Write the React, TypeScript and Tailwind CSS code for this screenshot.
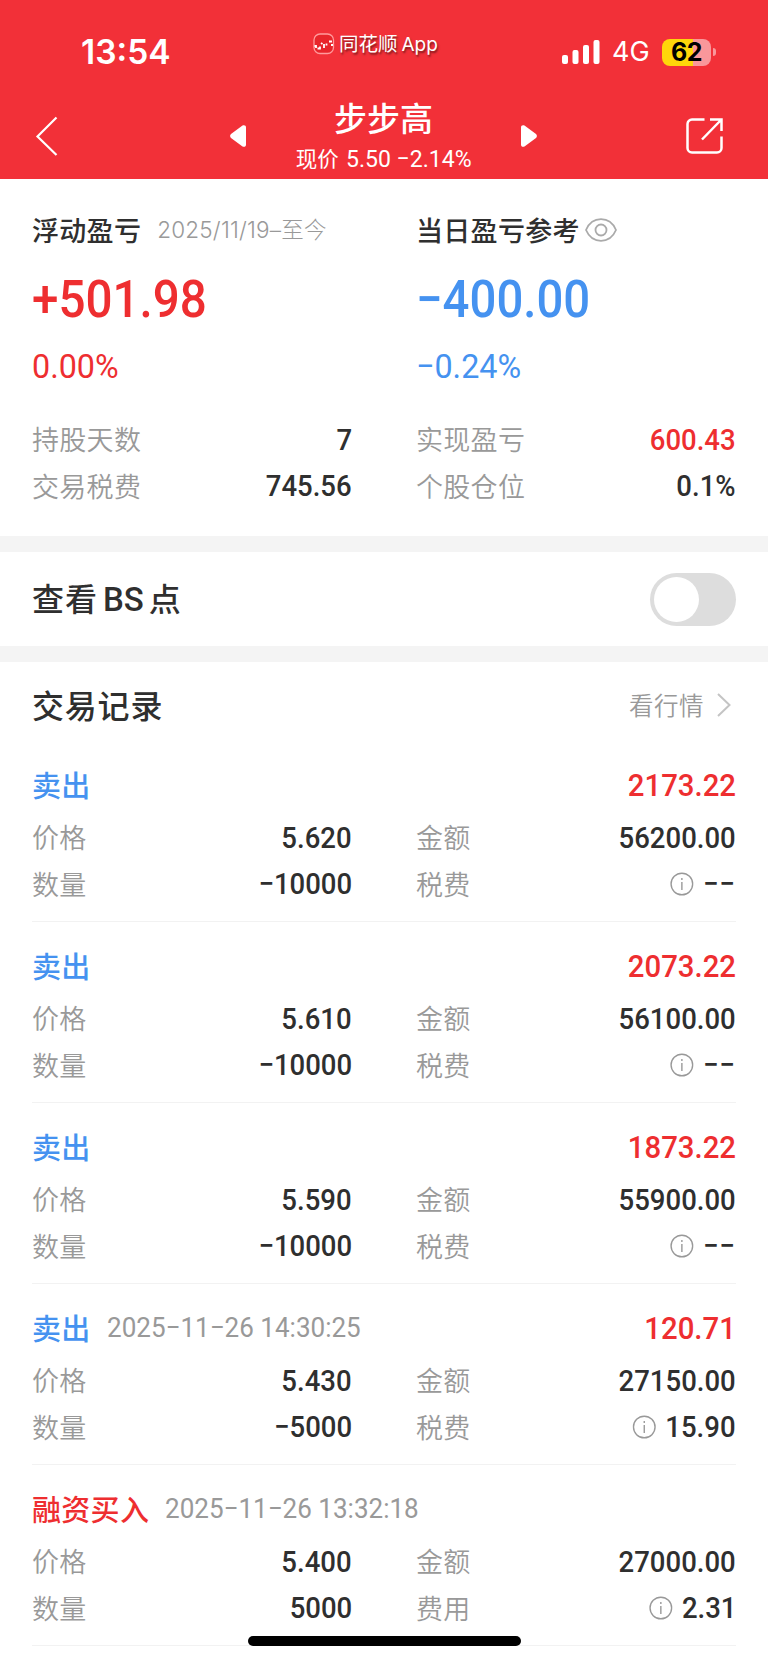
import { clsx } from "clsx";

interface Field {
    label: string;
    value: string;
    tone?: "up";
    info?: boolean;
}

interface TradeRecord {
    side: "卖出" | "融资买入";
    time?: string;
    profit?: string;
    fields: Field[];
}

const SUMMARY: Field[] = [
    { label: "持股天数", value: "7" },
    { label: "实现盈亏", value: "600.43", tone: "up" },
    { label: "交易税费", value: "745.56" },
    { label: "个股仓位", value: "0.1%" },
];

const makeFields = (price: string, amount: string, count: string, feeLabel: string, fee: string): Field[] => [
    { label: "价格", value: price },
    { label: "金额", value: amount },
    { label: "数量", value: count },
    { label: feeLabel, value: fee, info: true },
];

const RECORDS: TradeRecord[] = [
    { side: "卖出", profit: "2173.22", fields: makeFields("5.620", "56200.00", "−10000", "税费", "−−") },
    { side: "卖出", profit: "2073.22", fields: makeFields("5.610", "56100.00", "−10000", "税费", "−−") },
    { side: "卖出", profit: "1873.22", fields: makeFields("5.590", "55900.00", "−10000", "税费", "−−") },
    {
        side: "卖出",
        time: "2025−11−26 14:30:25",
        profit: "120.71",
        fields: makeFields("5.430", "27150.00", "−5000", "税费", "15.90"),
    },
    {
        side: "融资买入",
        time: "2025−11−26 13:32:18",
        fields: makeFields("5.400", "27000.00", "5000", "费用", "2.31"),
    },
];

function InfoIcon() {
    return (
        <svg className="h-6 w-6 scale-x-[1.09]" viewBox="0 0 24 24" fill="none" stroke="#999999" strokeWidth="1.4">
            <circle cx="12" cy="12" r="10.8" />
            <path d="M12 10v8M12 6v2" />
        </svg>
    );
}

function EyeIcon() {
    return (
        <svg className="w-8 h-6" viewBox="0 0 32 24" fill="none" stroke="#aaaaaa" strokeWidth="1.8">
            <path d="M1 12C4 5 9.500 1.200 16 1.200S28 5 31 12c-3 7-8.500 10.800-15 10.800S4 19 1 12Z" />
            <circle cx="16" cy="12" r="5.500" />
        </svg>
    );
}

function StatusBar() {
    return (
        <div className="flex h-[92px] items-start justify-between pl-[81px] pr-[52px]">
            <div className="mt-[32px] w-[232px] font-['Inter'] text-[33.500px] font-semibold leading-10">13:54</div>
            <div className="mt-[31px] flex flex-1 items-center gap-1">
                <svg className="h-[22px] w-[22px]" viewBox="0 0 22 22" fill="none">
                    <rect x="1" y="1" width="19.500" height="19.500" rx="6" fill="#e8252b" stroke="#ff9a9c" strokeWidth="1.300" />
                    <path d="M1.500 13h1.500v2M4.500 15.500h2.500v-2M8 10l1.500 1M11 11v4M13.500 10.500v2M16 8.500h3M18 12h2" stroke="#fff" strokeWidth="1.800" />
                </svg>
                <span className="text-[19.500px] leading-6 [text-shadow:1px_2px_2px_rgba(0,0,0,0.5)]">
                    同花顺<span className="ml-1 font-['Inter'] text-[19px]">App</span>
                </span>
            </div>
            <div className="mt-[38px] flex items-center">
                <svg className="h-6 w-[38px]" viewBox="0 0 38 24" fill="#fff">
                    <rect x="0" y="15" width="6" height="9" rx="2" />
                    <rect x="10.500" y="10" width="6" height="14" rx="2" />
                    <rect x="21" y="5" width="6" height="19" rx="2" />
                    <rect x="31.500" y="0" width="6" height="24" rx="2" />
                </svg>
                <span className="ml-3 w-[50px] font-['Inter'] text-[27px] leading-7">4G</span>
                <div className="flex h-[27px] w-[49px] items-center justify-center rounded-[8px] bg-linear-to-r from-[#ffd60a] from-[63%] to-[#f9979b] to-[63%] font-['Inter'] text-[25px] font-bold leading-none tracking-[-0.500px] text-black">
                    62
                </div>
                <div className="ml-[2px] h-2 w-[3px] rounded-r-full bg-[#f9979b]" />
            </div>
        </div>
    );
}

function NavBar() {
    return (
        <div className="grid h-[87px] grid-cols-[1fr_auto_1fr] items-center pl-[35px] pr-[45px]">
            <svg className="h-10 w-[24px]" viewBox="0 0 24 40" fill="none" stroke="#fff" strokeWidth="2.200">
                <path d="M21.500 1.500 2.500 20.500l19 18.500" />
            </svg>
            <div className="ml-[9px] flex items-center">
                <svg className="h-[22px] w-4" viewBox="0 0 16 22" fill="#fff">
                    <path d="M12.500.500C14.500-.300 16 .500 16 2.500v17c0 2-1.500 2.800-3.500 2L1 13c-1.200-1-1.200-3 0-4Z" />
                </svg>
                <div className="flex w-[275px] flex-col items-center">
                    <div className="-mt-[3px] text-[33px] font-medium leading-[46px]">步步高</div>
                    <div className="mt-[2px] flex items-baseline font-['Roboto'] text-[24.500px] leading-8">
                        <span className="font-['Noto_Sans_CJK_SC',sans-serif] text-[21.500px]">现价</span>
                        <span className="-mr-2 ml-[7px] origin-left scale-x-[0.94] font-[450]">5.50 −2.14%</span>
                    </div>
                </div>
                <svg className="h-[22px] w-4" viewBox="0 0 16 22" fill="#fff">
                    <path d="M3.500.500C1.500-.300 0 .500 0 2.500v17c0 2 1.500 2.800 3.500 2L15 13c1.200-1 1.200-3 0-4Z" />
                </svg>
            </div>
            <svg className="h-9 w-[37px] justify-self-end" viewBox="0 0 37 36" fill="none" stroke="#fff" strokeWidth="2.500">
                <path d="M18.500 1.500H6a4.500 4.500 0 0 0-4.500 4.500v24A4.500 4.500 0 0 0 6 34.500h25a4.500 4.500 0 0 0 4.500-4.500V18.500" />
                <path d="M24 1.500h11.500V13M35 2 16 21.500" />
            </svg>
        </div>
    );
}

function FieldGrid({ fields }: { fields: Field[] }) {
    return (
        <div className="grid grid-cols-2 gap-x-16 text-[27px]">
            {fields.map((field) => (
                <div key={field.label} className="flex h-[46.500px] items-center justify-between">
                    <span className="font-[350] tracking-[0.300px] text-[#999999]">{field.label}</span>
                    {/* Figures are condensed, the icon is widened back so it stays round */}
                    <span className="flex origin-right scale-x-[0.917] items-center gap-[11px]">
                        {field.info && <InfoIcon />}
                        <span
                            className={clsx(
                                "font-['Roboto'] text-[30px] font-medium",
                                field.value === "−−" && "tracking-[1px]",
                                field.tone === "up" ? "text-[#ee2e30]" : "text-[#2f2f2f]"
                            )}
                        >
                            {field.value}
                        </span>
                    </span>
                </div>
            ))}
        </div>
    );
}

function Summary() {
    return (
        <section className="h-[357px] px-8 pt-[31px]">
            <div className="grid grid-cols-2 gap-x-16">
                <div>
                    <div className="flex h-10 items-center">
                        <span className="text-[27px] font-medium tracking-[0.300px]">浮动盈亏</span>
                        <span className="ml-4 font-['Inter','Noto_Sans_CJK_SC',sans-serif] text-[22.500px] font-light tracking-[0.200px] text-[#999999]">
                            2025/11/19–至今
                        </span>
                    </div>
                    <div className="mt-[20px] h-[60px] origin-left scale-x-[0.915] font-['Roboto'] text-[52px] font-medium leading-[60px] text-[#ee2e30]">
                        +501.98
                    </div>
                    <div className="mt-[16px] h-10 origin-left scale-x-[0.95] font-['Roboto'] text-[34px] font-[450] leading-10 text-[#ee2e30]">
                        0.00%
                    </div>
                </div>
                <div>
                    <div className="flex h-10 items-center">
                        <span className="text-[27px] font-medium tracking-[0.300px]">当日盈亏参考</span>
                        <span className="ml-[5px]">
                            <EyeIcon />
                        </span>
                    </div>
                    <div className="mt-[20px] h-[60px] origin-left scale-x-[0.91] font-['Roboto'] text-[52px] font-medium leading-[60px] text-[#4592f0]">
                        −400.00
                    </div>
                    <div className="mt-[16px] h-10 origin-left scale-x-[0.95] font-['Roboto'] text-[34px] font-[450] leading-10 text-[#4592f0]">
                        −0.24%
                    </div>
                </div>
            </div>
            <div className="mt-[30px]">
                <FieldGrid fields={SUMMARY} />
            </div>
        </section>
    );
}

function RecordItem({ record }: { record: TradeRecord }) {
    return (
        <div className="h-[181px] border-b border-[#f2f2f2] pt-[18px]">
            <div className="mb-[3px] flex h-[52px] items-center">
                <span
                    className={clsx(
                        "text-[29px] font-medium tracking-[0.300px]",
                        record.side === "卖出" ? "text-[#4592f0]" : "text-[#ee2e30]"
                    )}
                >
                    {record.side}
                </span>
                {record.time && (
                    <span className="ml-4 origin-left scale-x-[0.93] font-['Roboto'] text-[28px] text-[#999999]">{record.time}</span>
                )}
                <span className="ml-auto origin-right scale-x-[0.917] font-['Roboto'] text-[32px] font-medium text-[#ee2e30]">
                    {record.profit}
                </span>
            </div>
            <FieldGrid fields={record.fields} />
        </div>
    );
}

export default function App() {
    return (
        <div className="relative h-[1663px] w-[768px] overflow-hidden bg-white font-['Noto_Sans_CJK_SC',sans-serif] text-[#2f2f2f]">
            <header className="h-[179px] bg-[#f23038] text-white">
                <StatusBar />
                <NavBar />
            </header>

            <Summary />

            <section className="flex h-[126px] items-center justify-between border-y-16 border-[#f4f4f4] px-8">
                <div className="text-[32px] font-medium tracking-[1px]">
                    查看<span className="mx-[5px] font-['Roboto'] text-[33px] tracking-normal">BS</span>点
                </div>
                <div className="flex h-[53px] w-[86px] items-center rounded-full bg-[#dddddd] pl-1">
                    <div className="h-[45px] w-[45px] rounded-full bg-white" />
                </div>
            </section>

            <section className="px-8">
                <div className="flex h-[79px] items-center justify-between pt-[5px]">
                    <h2 className="text-[32px] font-medium tracking-[0.800px]">交易记录</h2>
                    <div className="flex items-center pr-1 pt-[2px]">
                        <span className="text-[24.500px] font-[350] tracking-[0.500px] text-[#999999]">看行情</span>
                        <svg className="ml-3 h-6 w-4" viewBox="0 0 16 24" fill="none" stroke="#c4c4c4" strokeWidth="2">
                            <path d="m2 1 11.500 11L2 23" />
                        </svg>
                    </div>
                </div>
                {RECORDS.map((record, i) => (
                    <RecordItem key={i} record={record} />
                ))}
            </section>

            {/* Home indicator */}
            <div className="absolute bottom-[17px] left-[248px] h-[10px] w-[273px] rounded-full bg-black" />
        </div>
    );
}
